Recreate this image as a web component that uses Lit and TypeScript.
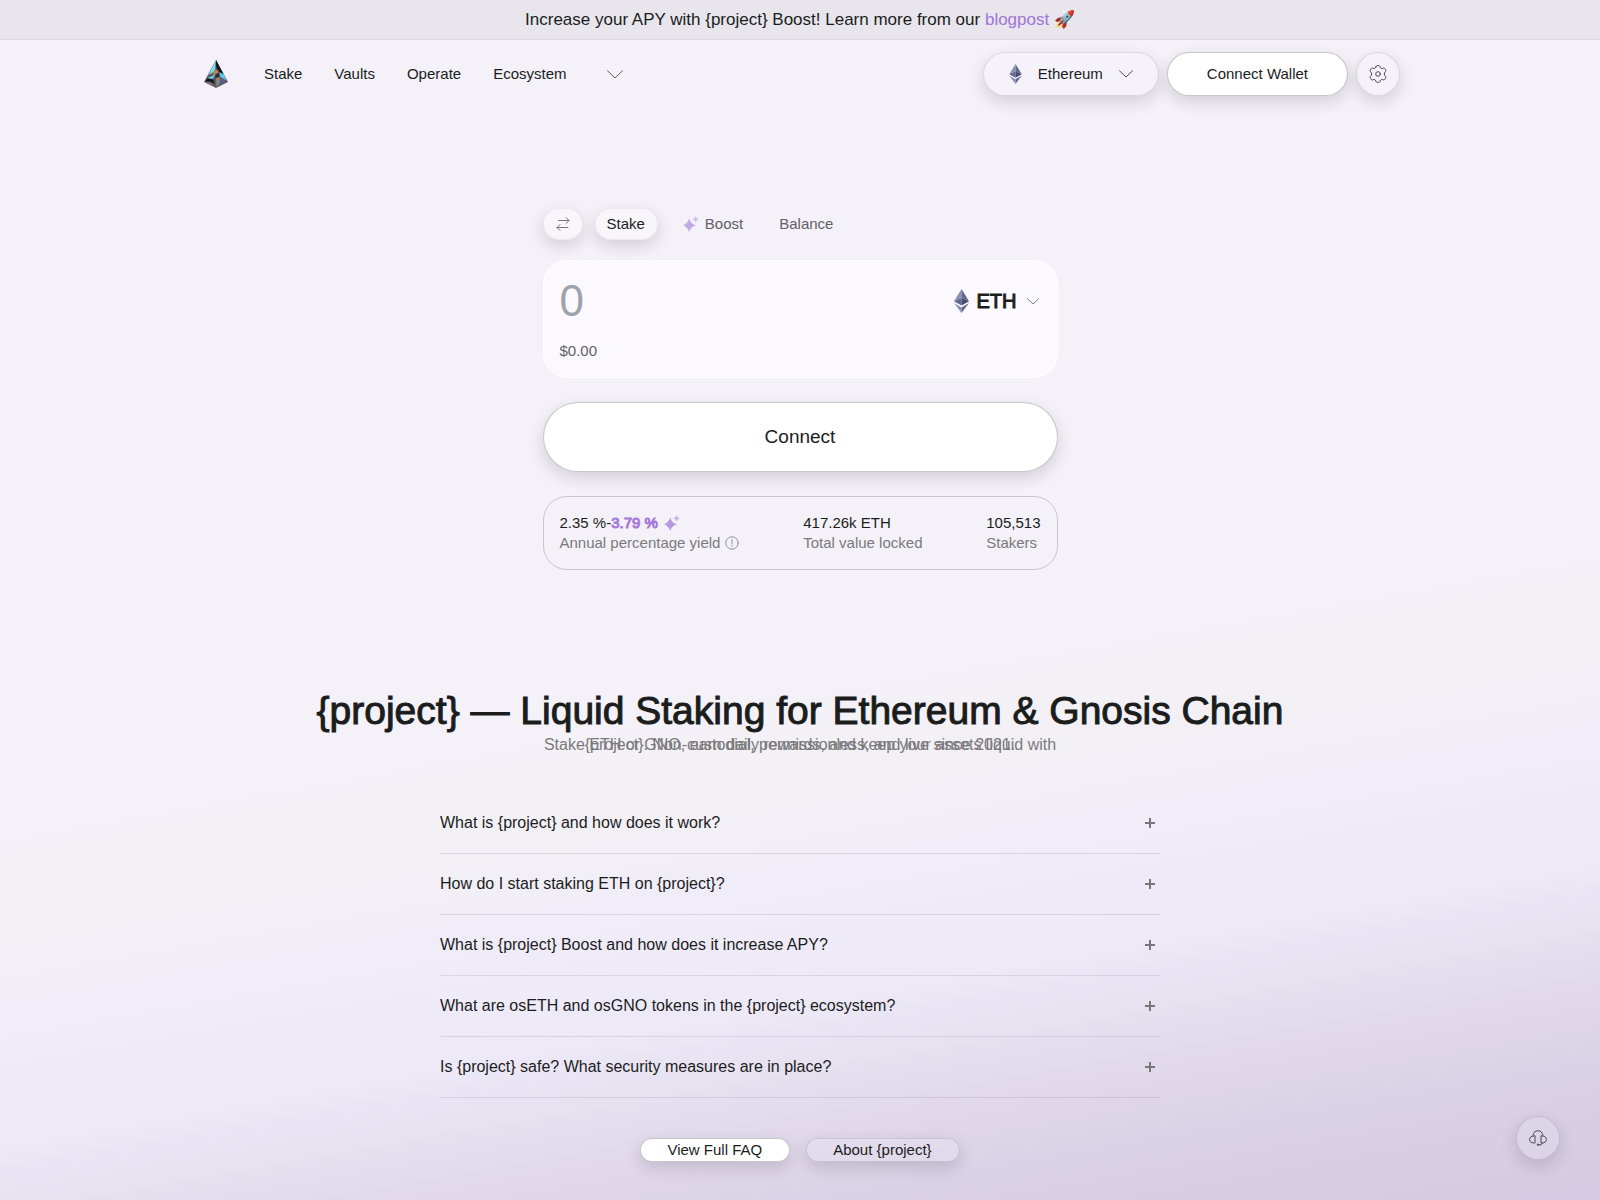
import { LitElement, html, css, svg } from "lit";
import { customElement, state } from "lit/decorators.js";

const FAQ = [
  "What is {project} and how does it work?",
  "How do I start staking ETH on {project}?",
  "What is {project} Boost and how does it increase APY?",
  "What are osETH and osGNO tokens in the {project} ecosystem?",
  "Is {project} safe? What security measures are in place?",
];

const chevron = (w: number, h: number) => html`<svg
  class="chevron" width=${w} height=${h} viewBox="0 0 ${w} ${h}" aria-hidden="true">
  ${svg`<path d="M0.5 0.8 L${w / 2} ${h - 1} L${w - 0.5} 0.8" />`}
</svg>`;

const ethIcon = (w: number, h: number) => html`<svg width=${w} height=${h} viewBox="0 0 15 24" aria-hidden="true">
  <path fill="#8a92b2" d="M7.5 0 L0 12.2 L7.5 9z" />
  <path fill="#62688f" d="M7.5 0 L15 12.2 L7.5 9z" />
  <path fill="#62688f" d="M0 12.2 L7.5 9 V16.6z" />
  <path fill="#454a75" d="M15 12.2 L7.5 9 V16.6z" />
  <path fill="#8a92b2" d="M0 14 L7.5 18.4 V24z" />
  <path fill="#62688f" d="M15 14 L7.5 18.4 V24z" />
</svg>`;

const sparkle = html`<svg class="sparkle" width="16" height="16" viewBox="0 0 16 16" aria-hidden="true">
  <path d="M6.2 2.2 C6.9 4.6 7.8 6.2 9 7.2 C10 8.200 11.400 8.800 13.200 9.300 C11.400 9.800 10 10.400 9 11.400 C7.800 12.400 6.900 13.800 6.200 16 C5.500 13.800 4.600 12.400 3.400 11.400 C2.400 10.400 1.400 9.800 0 9.300 C1.400 8.800 2.400 8.200 3.400 7.200 C4.600 6.200 5.500 4.600 6.200 2.200z" />
  <path opacity="0.7" d="M12.600 0 C13.200 1.900 14 2.700 16 3.300 C14 3.900 13.200 4.700 12.600 6.800 C12 4.700 11.200 3.900 9.200 3.300 C11.200 2.700 12 1.900 12.600 0z" />
</svg>`;

const logo = html`<svg width="24" height="28" viewBox="0 0 24 28" aria-hidden="true">
  <path fill="#5a5a66" d="M12 0 L24 22 L12 28 L0 22z" />
  <path fill="#7fdcec" d="M11.600 0.800 L11.200 11 L4.500 15z" />
  <path fill="#11161f" d="M12 0 L19.500 14 L14 11 L12 6z" />
  <path fill="#5cc8e4" d="M15 12.500 L19.500 14 L22.500 20.500 L16.500 17z" />
  <path fill="#66cfe8" d="M3.500 18 L11.500 14.500 L8.500 19z" />
  <path fill="#11161f" d="M1 21.500 L3.500 18.500 L9.500 19.500 L10.500 24 L6 21.500z" />
  <path fill="#b98357" d="M10.500 9.500 L14.500 10.500 L13 14.500 L8.500 15z" />
  <path fill="#2b2e38" d="M11.500 14 L15.500 13 L15 17 L11.500 18z" />
  <path fill="#a87c5c" d="M12 18 L16 17.500 L15 24 L12.500 27z" />
  <path fill="#5f5a86" d="M16 17.500 L23 21.500 L17 24z" />
  <path fill="#2fa5d5" d="M13.500 20 L16 22 L14 25z" />
  <path fill="#9a7a62" d="M1.500 22 L6 22.500 L11 26.500z" />
</svg>`;

const swapIcon = html`<svg class="line" width="14" height="14" viewBox="0 0 14 14" aria-hidden="true">
  <path d="M2.500 3.500 H13 M10 0.500 L13 3.500 L10 6.500 M12 10.500 H1 M4 7.500 L1 10.500 L4 13.500" />
</svg>`;

const gearIcon = html`<svg class="line" width="18" height="18" viewBox="0 0 18 18" aria-hidden="true">
  <path d="M6.800 2 C7 1 7.600 0.600 9 0.600 C10.400 0.600 11 1 11.200 2 C11.500 3.400 12.600 3.900 13.800 3.300 C14.800 2.800 15.600 3 16.300 4.200 C17 5.400 17 6.300 16.200 7 C15 8 15 10 16.200 11 C17 11.700 17 12.600 16.300 13.800 C15.600 15 14.800 15.200 13.800 14.700 C12.600 14.100 11.500 14.600 11.200 16 C11 17 10.400 17.400 9 17.400 C7.600 17.400 7 17 6.800 16 C6.500 14.600 5.400 14.100 4.200 14.700 C3.200 15.200 2.400 15 1.700 13.800 C1 12.600 1 11.700 1.800 11 C3 10 3 8 1.800 7 C1 6.300 1 5.400 1.700 4.200 C2.400 3 3.200 2.800 4.200 3.300 C5.400 3.900 6.500 3.400 6.800 2z" />
  <circle cx="9" cy="9" r="2.300" />
</svg>`;

const headsetIcon = html`<svg class="line" width="18" height="16" viewBox="0 0 18 16" aria-hidden="true">
  <path d="M4 5.500 C4.500 2.500 6.300 0.700 9 0.700 C11.700 0.700 13.500 2.500 14 5.500 M6 6 V13 H4.800 C2.200 13 0.600 11.700 0.600 9.500 C0.600 7.300 2.200 6 4.800 6z M12 6 V13 H13.200 C15.800 13 17.400 11.700 17.400 9.500 C17.400 7.300 15.800 6 13.200 6z M13.500 13 C13 14.600 11.800 15 10 15" />
  <circle cx="9" cy="14.700" r="0.800" />
</svg>`;

const infoIcon = html`<svg class="line info" width="14" height="14" viewBox="0 0 14 14" aria-hidden="true">
  <circle cx="7" cy="7" r="6.200" /><path d="M7 3.500 V8 M7 9.800 V10.500" />
</svg>`;

@customElement("app-root")
export class AppRoot extends LitElement {
  @state() private tab = "Stake";

  static styles = css`
    :host {
      display: block;
      min-height: 100vh;
      font-family: "Liberation Sans", Arial, sans-serif;
      font-size: 15px;
      line-height: 20px;
      color: #1b1d1d;
      background: linear-gradient(170deg, #f4f1f8 0%, #f4f1f8 54%, #f3f0f5 63%, #f0edf8 68%, #ede9f7 77%, #e3dcec 84%, #d9d1e5 91%, #d4cae3 100%);
    }
    * { box-sizing: border-box; }
    button, input { font: inherit; color: inherit; margin: 0; }
    button { padding: 0; border: 0; background: none; cursor: pointer; }
    a { color: inherit; text-decoration: none; }
    svg { display: block; flex: none; }
    .chevron, .line { fill: none; stroke: currentColor; stroke-width: 1; }
    .chevron, .line { stroke-linejoin: round; stroke-linecap: round; }
    .sparkle { fill: #b798de; }
    .banner {
      display: flex; justify-content: center; align-items: center;
      height: 40px;
      background: #e8e5ec; border-bottom: 1px solid #dbd8df;
      font-size: 17px;
    }
    .banner p { margin: 0; }
    .banner a { color: #a075d8; }
    .header {
      display: flex; align-items: center; justify-content: space-between;
      max-width: 1208px; margin: 0 auto; padding: 12px 4px;
    }
    .nav, .actions { display: flex; align-items: center; }
    .nav { gap: 32px; padding-left: 4px; }
    .actions { gap: 8px; }
    .logo { margin-right: 4px; }
    .more { display: flex; padding: 8px; color: #5c5b62; }
    .pill {
      display: flex; align-items: center; justify-content: center;
      border: 1px solid rgba(20, 20, 30, 0.12);
      background: rgba(255, 255, 255, 0.14);
      box-shadow: 0 6px 16px rgba(30, 20, 50, 0.15);
    }
    .solid { background: #fff; border-color: rgba(20, 20, 30, 0.24); }
    .net { gap: 16px; height: 44px; padding: 0 25px; border-radius: 22px; }
    .net .chevron { color: #4a4a50; }
    .wallet { height: 44px; padding: 0 39px; border-radius: 22px; }
    .round { width: 44px; height: 44px; border-radius: 50%; color: #4a4a50; }
    .widget { max-width: 515px; margin: 0 auto; padding-top: 100px; }
    .tabs { display: flex; align-items: center; }
    .swap, .tab { height: 32px; border-radius: 16px; }
    .swap { width: 40px; margin-right: 12px; color: #77757c; }
    .swap, .tab.on { border-color: rgba(20, 20, 30, 0.06); background: rgba(255, 255, 255, 0.4); }
    .tab { padding: 0 12px 0 11px; color: #626067; }
    .tab.on { color: #1b1d1d; }
    .tab.plain { border-color: transparent; background: none; box-shadow: none; }
    .tabs .sparkle { margin-right: 6px; opacity: 0.8; }
    .boost { margin: 0 11px 0 13px; }
    .card {
      margin-top: 20px; padding: 20px 16px 16px; height: 118px;
      border: 1px solid #fff; border-radius: 24px; background: #fbf9fd;
      display: flex; flex-direction: column; justify-content: space-between;
    }
    .row { display: flex; align-items: center; justify-content: space-between; gap: 16px; }
    .amount {
      flex: 1; min-width: 0; height: 40px; padding: 0; border: 0; outline: 0;
      background: none; font-size: 44px; line-height: 40px;
    }
    .amount::placeholder { color: #9ca3af; opacity: 1; }
    .token { display: flex; align-items: center; gap: 8px; font-size: 20px; -webkit-text-stroke: 1px currentColor; }
    .token .chevron { margin: 0 2px; color: #7d7b83; }
    .usd { color: #626067; }
    .connect { width: 100%; height: 70px; margin-top: 24px; border-radius: 35px; font-size: 19px; }
    .stats {
      display: flex; justify-content: space-between; margin: 24px 0 0;
      padding: 16px; border: 1px solid #c9c6ce; border-radius: 24px;
    }
    .stat { display: flex; flex-direction: column; }
    .stat dt { order: 2; display: flex; align-items: center; gap: 5px; color: #7a7a7c; }
    .stat dd { margin: 0; display: flex; align-items: center; }
    .info { opacity: 0.8; }
    .high { color: #a779dc; -webkit-text-stroke: 1px currentColor; }
    .stat .sparkle { margin-left: 6px; }
    .about { padding: 119px 24px 0; text-align: center; }
    h1 {
      margin: 0; font-size: 39px; line-height: 44px; font-weight: 400;
      -webkit-text-stroke: 1px currentColor;
    }
    .lead { max-width: 516px; margin: 12px auto 0; font-size: 16px; line-height: 0; color: #7a7a7c; }
    .faq { list-style: none; max-width: 720px; margin: 48px auto 0; padding: 0; }
    .faq li { border-bottom: 1px solid rgba(60, 50, 80, 0.12); }
    .question {
      display: flex; align-items: center; justify-content: space-between;
      width: 100%; height: 60px; padding-right: 4px; font-size: 16px; text-align: left;
    }
    .plus { stroke: #77777a; stroke-width: 2; }
    .links { display: flex; justify-content: center; gap: 16px; padding: 40px 0 38px; }
    .links a { height: 24px; padding: 0 27px 0 26px; border-radius: 12px; }
    .help { position: fixed; right: 40px; bottom: 40px; }
  `;

  private tabClass(name: string) {
    return this.tab === name ? "pill tab on" : "pill tab plain";
  }

  render() {
    return html`
      <div class="banner">
        <p>Increase your APY with {project} Boost! Learn more from our <a href="#blog">blogpost</a> 🚀</p>
      </div>
      <header class="header">
        <nav class="nav" aria-label="Main">
          <a class="logo" href="#home" aria-label="Home">${logo}</a>
          <a href="#stake">Stake</a>
          <a href="#vaults">Vaults</a>
          <a href="#operate">Operate</a>
          <a href="#ecosystem">Ecosystem</a>
          <button class="more" aria-label="More">${chevron(16, 9)}</button>
        </nav>
        <div class="actions">
          <button class="pill net">${ethIcon(13, 20)}<span>Ethereum</span>${chevron(14, 8)}</button>
          <button class="pill solid wallet">Connect Wallet</button>
          <button class="pill round" aria-label="Settings">${gearIcon}</button>
        </div>
      </header>
      <main>
        <section class="widget">
          <div class="tabs">
            <button class="pill swap" aria-label="Swap direction">${swapIcon}</button>
            <button class=${this.tabClass("Stake")} @click=${() => (this.tab = "Stake")}>Stake</button>
            <button class="${this.tabClass("Boost")} boost" @click=${() => (this.tab = "Boost")}>${sparkle}Boost</button>
            <button class=${this.tabClass("Balance")} @click=${() => (this.tab = "Balance")}>Balance</button>
          </div>
          <div class="card">
            <div class="row">
              <input class="amount" inputmode="decimal" placeholder="0" aria-label="Amount" />
              <button class="token">${ethIcon(15, 24)}<span>ETH</span>${chevron(12, 7)}</button>
            </div>
            <div class="usd">$0.00</div>
          </div>
          <button class="pill solid connect">Connect</button>
          <dl class="stats">
            <div class="stat">
              <dt>Annual percentage yield ${infoIcon}</dt>
              <dd>2.35 %-<span class="high">3.79 %</span>${sparkle}</dd>
            </div>
            <div class="stat"><dt>Total value locked</dt><dd>417.26k ETH</dd></div>
            <div class="stat"><dt>Stakers</dt><dd>105,513</dd></div>
          </dl>
        </section>
        <section class="about">
          <h1>{project} — Liquid Staking for Ethereum &amp; Gnosis Chain</h1>
          <p class="lead">Stake ETH or GNO, earn daily rewards, and keep your assets liquid with {project}. Non-custodial, permissionless, and live since 2021.</p>
          <ul class="faq">
            ${FAQ.map((q) => html`<li>
              <button class="question" aria-expanded="false">
                <span>${q}</span>
                <svg class="plus" width="12" height="12" viewBox="0 0 12 12" aria-hidden="true"><path d="M6 1 V11 M1 6 H11" /></svg>
              </button>
            </li>`)}
          </ul>
          <div class="links">
            <a class="pill solid" href="#faq">View Full FAQ</a>
            <a class="pill" href="#about">About {project}</a>
          </div>
        </section>
      </main>
      <button class="pill round help" aria-label="Support">${headsetIcon}</button>
    `;
  }
}
